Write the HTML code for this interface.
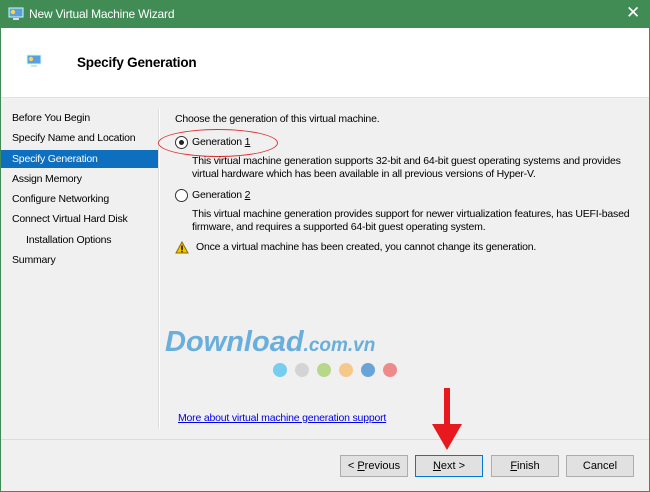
<html><head><style>
body{margin:0;width:650px;height:492px;overflow:hidden;font-family:"Liberation Sans",sans-serif;font-size:10.5px;letter-spacing:-0.2px;color:#000;background:#f0f0f0;position:relative}
.a{position:absolute;white-space:nowrap}
.btn{position:absolute;top:455px;width:66px;height:20px;border:1px solid #adadad;background:#e1e1e1;text-align:center;line-height:20px;font-size:11px;letter-spacing:0}
.nav{position:absolute;left:12px;white-space:nowrap}
</style></head><body>
<div class="a" style="left:0;top:0;width:650px;height:28px;background:#418b55"></div>
<div class="a" style="left:0;top:0;width:1px;height:492px;background:#418b55"></div>
<div class="a" style="right:0;top:0;width:1px;height:492px;background:#418b55"></div>
<div class="a" style="left:0;bottom:0;width:650px;height:1px;background:#418b55"></div>
<svg class="a" style="left:8px;top:7px" width="16" height="14"><rect x="1" y="1" width="14" height="9" fill="#5aa0e0" stroke="#cfe" /><circle cx="5" cy="5" r="2.2" fill="#ffd24a"/><rect x="5" y="11" width="6" height="2" fill="#ddd"/></svg>
<div class="a" style="left:29px;top:7px;color:#fff;font-size:12px;letter-spacing:-0.2px">New Virtual Machine Wizard</div>
<div class="a" style="left:626px;top:3px;color:#fff;font-size:17px">✕</div>
<div class="a" style="left:1px;top:28px;width:648px;height:69px;background:#fff;border-bottom:1px solid #e6dfe6"></div>
<svg class="a" style="left:26px;top:54px" width="16" height="14"><rect x="1" y="1" width="14" height="9" fill="#5aa0e0" stroke="#cfe"/><circle cx="5" cy="5" r="2.2" fill="#ffd24a"/><rect x="5" y="11" width="6" height="2" fill="#ddd"/></svg>
<div class="a" style="left:77px;top:55px;font-size:13.5px;font-weight:bold;letter-spacing:-0.2px">Specify Generation</div>
<div class="a" style="left:158px;top:109px;width:1px;height:320px;background:#fff;border-left:1px solid #ddd"></div>
<div class="nav" style="top:112px">Before You Begin</div>
<div class="nav" style="top:132px">Specify Name and Location</div>
<div class="a" style="left:1px;top:150px;width:157px;height:18px;background:#0d6fbe"></div>
<div class="nav" style="top:153px;color:#fff">Specify Generation</div>
<div class="nav" style="top:173px">Assign Memory</div>
<div class="nav" style="top:193px">Configure Networking</div>
<div class="nav" style="top:213px">Connect Virtual Hard Disk</div>
<div class="nav" style="top:234px;left:26px">Installation Options</div>
<div class="nav" style="top:254px">Summary</div>
<div class="a" style="left:175px;top:113px">Choose the generation of this virtual machine.</div>
<div class="a" style="left:158px;top:129px;width:118px;height:26px;border:1px solid #e03030;border-radius:50%"></div>
<div class="a" style="left:175px;top:136px;width:11px;height:11px;border:1px solid #333;border-radius:50%;background:#fff"><div style="margin:3px;width:5px;height:5px;border-radius:50%;background:#222"></div></div>
<div class="a" style="left:192px;top:136px">Generation <u>1</u></div>
<div class="a" style="left:192px;top:155px;line-height:13px">This virtual machine generation supports 32-bit and 64-bit guest operating systems and provides<br>virtual hardware which has been available in all previous versions of Hyper-V.</div>
<div class="a" style="left:175px;top:189px;width:11px;height:11px;border:1px solid #333;border-radius:50%;background:#fff"></div>
<div class="a" style="left:192px;top:189px">Generation <u>2</u></div>
<div class="a" style="left:192px;top:208px;line-height:13px">This virtual machine generation provides support for newer virtualization features, has UEFI-based<br>firmware, and requires a supported 64-bit guest operating system.</div>
<svg class="a" style="left:175px;top:241px" width="14" height="13"><path d="M7 1L13 12H1Z" fill="#f5c400" stroke="#8a6d00"/><rect x="6.3" y="4.5" width="1.4" height="4.5"/><rect x="6.3" y="9.8" width="1.4" height="1.4"/></svg>
<div class="a" style="left:196px;top:241px">Once a virtual machine has been created, you cannot change its generation.</div>
<div class="a" style="left:165px;top:326px;font-size:29px;font-weight:bold;font-style:italic;color:#6aaedc;letter-spacing:0px">Download<span style="font-size:19px">.com.vn</span></div>
<div class="a" style="left:273px;top:363px;width:14px;height:14px;border-radius:50%;background:#77cdf0"></div>
<div class="a" style="left:295px;top:363px;width:14px;height:14px;border-radius:50%;background:#d4d4d4"></div>
<div class="a" style="left:317px;top:363px;width:14px;height:14px;border-radius:50%;background:#b7d88a"></div>
<div class="a" style="left:339px;top:363px;width:14px;height:14px;border-radius:50%;background:#f5c98a"></div>
<div class="a" style="left:361px;top:363px;width:14px;height:14px;border-radius:50%;background:#6aa4d6"></div>
<div class="a" style="left:383px;top:363px;width:14px;height:14px;border-radius:50%;background:#f08a8a"></div>
<div class="a" style="left:178px;top:412px;color:#0000ee;text-decoration:underline">More about virtual machine generation support</div>
<div class="a" style="left:1px;top:439px;width:648px;height:1px;background:#dcdcdc"></div>
<svg class="a" style="left:430px;top:388px" width="34" height="64"><rect x="14" y="0" width="6" height="36" fill="#e8191e"/><path d="M2 36H32L17 62Z" fill="#e8191e"/></svg>
<div class="btn" style="left:340px">&lt; <u>P</u>revious</div>
<div class="btn" style="left:415px;border-color:#0078d7"><u>N</u>ext &gt;</div>
<div class="btn" style="left:491px"><u>F</u>inish</div>
<div class="btn" style="left:566px">Cancel</div>
</body></html>
